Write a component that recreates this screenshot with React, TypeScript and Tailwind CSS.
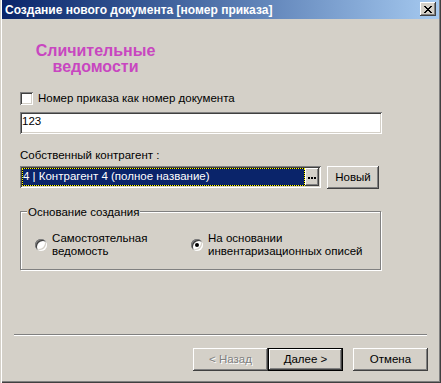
const raised =
  "shadow-[inset_-1px_-1px_0_#404040,inset_1px_1px_0_#fff,inset_-2px_-2px_0_#808080,inset_2px_2px_0_#d4d0c8]";
const sunken =
  "shadow-[inset_1px_1px_0_#808080,inset_-1px_-1px_0_#fff,inset_2px_2px_0_#404040,inset_-2px_-2px_0_#d4d0c8]";

function CloseGlyph() {
  return (
    <svg width="8" height="7" viewBox="0 0 8 7" shapeRendering="crispEdges">
      <path
        fill="#000"
        d="M0 0h2v1H0zM6 0h2v1H6zM1 1h2v1H1zM5 1h2v1H5zM2 2h4v1H2zM3 3h2v1H3zM2 4h4v1H2zM1 5h2v1H1zM5 5h2v1H5zM0 6h2v1H0zM6 6h2v1H6z"
      />
    </svg>
  );
}

function Radio({ checked }: { checked?: boolean }) {
  return (
    <div
      className={`w-[12px] h-[12px] shrink-0 rounded-full bg-white flex items-center justify-center ${sunken}`}
    >
      {checked && <div className="w-[4px] h-[4px] rounded-full bg-black" />}
    </div>
  );
}

export default function App() {
  return (
    <div className="w-[441px] h-[383px] bg-[#d4d0c8] font-['Liberation_Sans',Arial,sans-serif] text-[11.5px] leading-[13px] text-black flex flex-col px-[2px] shadow-[inset_1px_0_0_#d4d0c8,inset_2px_0_0_#fff,inset_-1px_-1px_0_#404040,inset_-2px_-2px_0_#808080]">
      {/* title bar */}
      <div className="h-[19px] shrink-0 flex items-start justify-between bg-linear-to-r from-[#0a246a] to-[#a6caf0]">
        <span className="pl-[3px] pt-[2px] text-[12px] leading-[17px] font-bold text-white whitespace-nowrap">
          Создание нового документа [номер приказа]
        </span>
        <div className={`mt-[2px] mr-[3px] w-[16px] h-[14px] bg-[#d4d0c8] flex items-center justify-center pr-[1px] ${raised}`}>
          <CloseGlyph />
        </div>
      </div>

      <div className="pl-[18px] flex flex-col">
        <div className="mt-[24px] w-[151px] text-center text-[16px] leading-[16px] font-bold text-[#c846c0]">
          Сличительные
          <br />
          ведомости
        </div>

        <div className="mt-[17px] flex items-center h-[13px]">
          <div className={`w-[13px] h-[13px] bg-white ${sunken}`} />
          <span className="ml-[5px]">Номер приказа как номер документа</span>
        </div>

        <div className={`mt-[7px] w-[362px] h-[22px] bg-white pl-[2px] pt-[3px] ${sunken}`}>123</div>

        <div className="mt-[15px]">Собственный контрагент :</div>

        <div className="mt-[4px] flex items-start">
          <div className={`w-[301px] h-[22px] bg-white p-[2px] flex ${sunken}`}>
            <div className="flex-1 bg-black">
              <div className="h-full border border-dotted border-[#ffff00] bg-[#0a246a] bg-clip-padding text-white leading-[15px] whitespace-nowrap">
                4 | Контрагент 4 (полное название)
              </div>
            </div>
            <div className={`w-[14px] h-full bg-[#d4d0c8] flex items-center justify-center gap-[1px] pt-[1px] ${raised}`}>
              <span className="w-[2px] h-[2px] bg-black" />
              <span className="w-[2px] h-[2px] bg-black" />
              <span className="w-[2px] h-[2px] bg-black" />
            </div>
          </div>
          <div className={`ml-[6px] w-[52px] h-[23px] flex items-center justify-center ${raised}`}>Новый</div>
        </div>

        <div className="mt-[22px] relative w-[361px] h-[59px] border border-[#808080] shadow-[inset_1px_1px_0_#fff,1px_1px_0_#fff]">
          <span className="absolute left-[6px] -top-[6px] px-[1px] bg-[#d4d0c8]">Основание создания</span>
          <div className="flex pt-[20px] pl-[14px]">
            <div className="w-[156px] flex items-center">
              <Radio />
              <span className="ml-[5px]">
                Самостоятельная
                <br />
                ведомость
              </span>
            </div>
            <div className="flex items-center">
              <Radio checked />
              <span className="ml-[5px]">
                На основании
                <br />
                инвентаризационных описей
              </span>
            </div>
          </div>
        </div>
      </div>

      {/* footer */}
      <div className="mt-auto">
        <div className="mx-[12px] h-[2px] border-t border-[#808080] border-b border-b-white" />
        <div className="mt-[12px] mb-[12px] flex justify-end pr-[11px]">
          <div className={`w-[75px] h-[23px] flex items-center justify-center text-[#808080] [text-shadow:1px_1px_0_#fff] ${raised}`}>
            &lt; Назад
          </div>
          <div className="w-[75px] h-[23px] border border-black">
            <div className={`w-full h-full flex items-center justify-center ${raised}`}>Далее &gt;</div>
          </div>
          <div className={`ml-[10px] w-[75px] h-[23px] flex items-center justify-center ${raised}`}>Отмена</div>
        </div>
      </div>
    </div>
  );
}
